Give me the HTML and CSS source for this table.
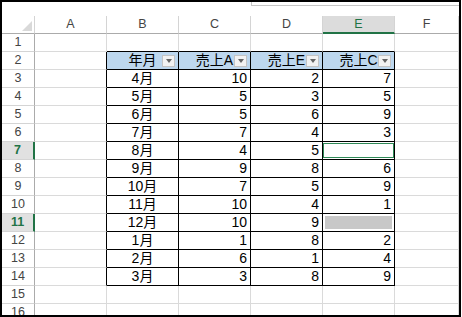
FILE: index.html
```html
<!DOCTYPE html>
<html lang="ja">
<head>
<meta charset="utf-8">
<title>Sheet</title>
<link rel="stylesheet" href="styles.css">
</head>
<body>
<div class="frame">
  <div class="top"><div class="namebox"></div></div>
  <div class="sheet">
    <div class="corner"><svg width="10" height="10" viewBox="0 0 10 10"><polygon points="10,0 10,10 0,10" fill="#d9d9d9"/></svg></div>
    <div class="ch">A</div><div class="ch">B</div><div class="ch">C</div><div class="ch">D</div><div class="ch sel">E</div><div class="ch">F</div>

    <div class="rh">1</div><div></div><div class="tt"></div><div class="tt"></div><div class="tt"></div><div class="tt"></div><div></div>

    <div class="rh">2</div><div class="tl"></div>
    <div class="c hd">年月<span class="dd"></span></div>
    <div class="c hd">売上A<span class="dd"></span></div>
    <div class="c hd">売上E<span class="dd"></span></div>
    <div class="c hd">売上C<span class="dd"></span></div><div></div>

    <div class="rh">3</div><div class="tl"></div><div class="c m">4月</div><div class="c n">10</div><div class="c n">2</div><div class="c n">7</div><div></div>
    <div class="rh">4</div><div class="tl"></div><div class="c m">5月</div><div class="c n">5</div><div class="c n">3</div><div class="c n">5</div><div></div>
    <div class="rh">5</div><div class="tl"></div><div class="c m">6月</div><div class="c n">5</div><div class="c n">6</div><div class="c n">9</div><div></div>
    <div class="rh">6</div><div class="tl"></div><div class="c m">7月</div><div class="c n">7</div><div class="c n">4</div><div class="c n">3</div><div></div>
    <div class="rh sel">7</div><div class="tl"></div><div class="c m">8月</div><div class="c n">4</div><div class="c n">5</div><div class="c active"><span class="cursor"></span></div><div></div>
    <div class="rh">8</div><div class="tl"></div><div class="c m">9月</div><div class="c n">9</div><div class="c n">8</div><div class="c n">6</div><div></div>
    <div class="rh">9</div><div class="tl"></div><div class="c m">10月</div><div class="c n">7</div><div class="c n">5</div><div class="c n">9</div><div></div>
    <div class="rh">10</div><div class="tl"></div><div class="c m">11月</div><div class="c n">10</div><div class="c n">4</div><div class="c n">1</div><div></div>
    <div class="rh sel">11</div><div class="tl"></div><div class="c m">12月</div><div class="c n">10</div><div class="c n">9</div><div class="c picked"><span class="fill"></span></div><div></div>
    <div class="rh">12</div><div class="tl"></div><div class="c m">1月</div><div class="c n">1</div><div class="c n">8</div><div class="c n">2</div><div></div>
    <div class="rh">13</div><div class="tl"></div><div class="c m">2月</div><div class="c n">6</div><div class="c n">1</div><div class="c n">4</div><div></div>
    <div class="rh">14</div><div class="tl"></div><div class="c m">3月</div><div class="c n">3</div><div class="c n">8</div><div class="c n">9</div><div></div>

    <div class="rh">15</div><div></div><div></div><div></div><div></div><div></div><div></div>
    <div class="rh">16</div><div></div><div></div><div></div><div></div><div></div><div></div>
  </div>
</div>
</body>
</html>
```

FILE: styles.css
```css
html, body {
  margin: 0;
  background: #fff;
}

.frame {
  width: 461px;
  height: 317px;
  box-sizing: border-box;
  border: 2px solid #000;
  overflow: hidden;
  display: flex;
  flex-direction: column;
  background: #fff;
}

.top {
  height: 14px;
  flex: none;
}

.namebox {
  margin-left: 249px;
  height: 4px;
  box-sizing: border-box;
  border-left: 1px solid #c6c6c6;
  border-bottom: 1px solid #c6c6c6;
}

.sheet {
  display: grid;
  grid-template-columns: 33px repeat(5, 72px) 1fr;
  grid-auto-rows: 18px;
  font-family: "Liberation Sans", "Noto Sans CJK JP", sans-serif;
}

.sheet > div {
  box-sizing: border-box;
  border-right: 1px solid #dadada;
  border-bottom: 1px solid #dadada;
  position: relative;
  overflow: hidden;
  white-space: nowrap;
}

.sheet > .corner {
  border-right: 1px solid #d4d4d4;
  border-bottom: 1px solid #ababab;
  display: flex;
  justify-content: flex-end;
  align-items: flex-end;
  padding: 0 2px 2px 0;
}

.sheet > .ch {
  font-family: "Liberation Sans", sans-serif;
  font-size: 12.5px;
  line-height: 17px;
  color: #444;
  text-align: center;
  border-right: 1px solid #d4d4d4;
  border-bottom: 1px solid #ababab;
}

.sheet > .ch.sel {
  background: #dcdcdc;
  color: #217346;
  border-bottom: 2px solid #217346;
  line-height: 16px;
}

.sheet > .rh {
  font-family: "Liberation Sans", sans-serif;
  font-size: 12.5px;
  line-height: 17px;
  color: #444;
  text-align: center;
  border-right: 1px solid #ababab;
  border-bottom: 1px solid #d4d4d4;
}

.sheet > .rh.sel {
  background: #e1e1e1;
  color: #217346;
  font-weight: bold;
  border-right: 2px solid #217346;
}

.sheet > .tl {
  border-right: 1px solid #000;
}

.sheet > .tt {
  border-bottom: 1px solid #000;
}

.sheet > .c {
  border-right: 1px solid #000;
  border-bottom: 1px solid #000;
  font-size: 14px;
  line-height: 17px;
  color: #000;
}

.sheet > .hd {
  background: #bdd7ee;
  text-align: center;
}

.sheet > .m {
  text-align: center;
}

.sheet > .n {
  text-align: right;
  padding-right: 3px;
}

.dd {
  position: absolute;
  right: 3px;
  top: 3px;
  width: 13px;
  height: 12px;
  box-sizing: border-box;
  border: 1px solid #c4c4c4;
  background: #f2f2f2;
  display: flex;
  align-items: center;
  justify-content: center;
}

.dd::after {
  content: "";
  border-left: 3.5px solid transparent;
  border-right: 3.5px solid transparent;
  border-top: 4px solid #666;
}

.sheet > .active,
.sheet > .picked {
  display: flex;
}

.cursor {
  flex: 1;
  margin: 1px 0 1px 0;
  border: 1px solid #2f8a57;
}

.fill {
  flex: 1;
  margin: 2px;
  background: #c8c8c8;
}
```
